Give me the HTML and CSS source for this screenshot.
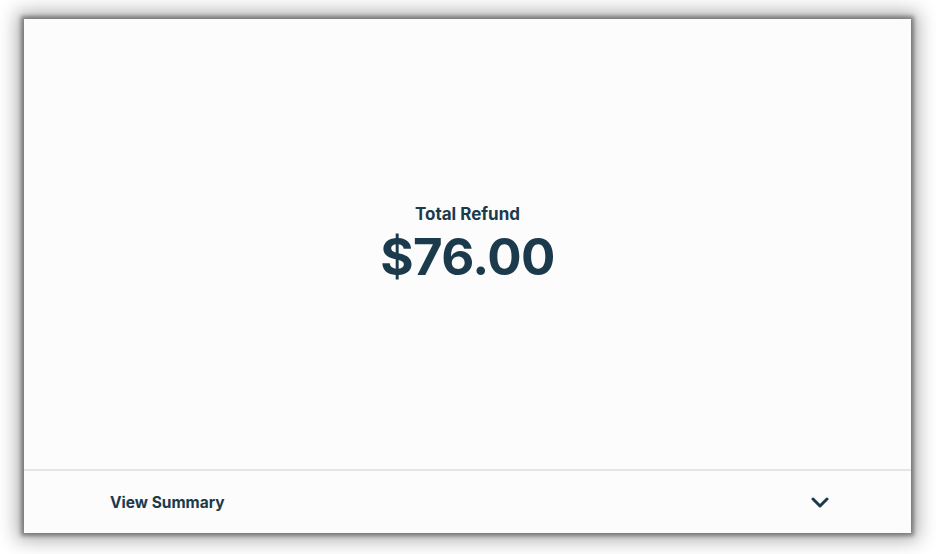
FILE: index.html
```html
<!DOCTYPE html>
<html>
<head>
<meta charset="utf-8">
<link rel="stylesheet" href="styles.css">
</head>
<body>
<div class="page">
  <div class="card">
    <div class="main">
      <div class="label">Total Refund</div>
      <div class="amount">$76.00</div>
    </div>
    <div class="footer">
      <span class="summary">View Summary</span>
      <svg class="chev" width="18" height="11" viewBox="0 0 18 11"><path d="M2 2 L9 9 L16 2" fill="none" stroke="#1b3a4c" stroke-width="3" stroke-linecap="round" stroke-linejoin="round"/></svg>
    </div>
  </div>
</div>
</body>
</html>
```
FILE: styles.css
```css
html, body { margin: 0; padding: 0; background: #ffffff; }
body { font-family: Inter, "Noto Sans", sans-serif; color: #1b3a4c; }
.page { width: 936px; height: 554px; box-sizing: border-box; padding: 19px 25px 21px 24px; }
.card {
  height: 100%;
  background: #fcfcfd;
  box-shadow: 0 0 4px 3px rgba(0,0,0,0.38), 0 0 18px 7px rgba(0,0,0,0.32);
  display: flex;
  flex-direction: column;
}
.main {
  flex: 1;
  display: flex;
  flex-direction: column;
  align-items: center;
  justify-content: center;
  border-bottom: 2px solid #e2e7eb;
}
.label { font-size: 17px; font-weight: 700; line-height: 20px; }
.amount { font-size: 51px; font-weight: 700; line-height: 56px; letter-spacing: -0.6px; margin-top: 5px; }
.footer {
  height: 62px;
  flex: none;
  display: flex;
  align-items: center;
  justify-content: space-between;
  padding: 0 82px 0 86px;
}
.summary { font-size: 15.5px; font-weight: 700; }
.chev { display: block; }
```
